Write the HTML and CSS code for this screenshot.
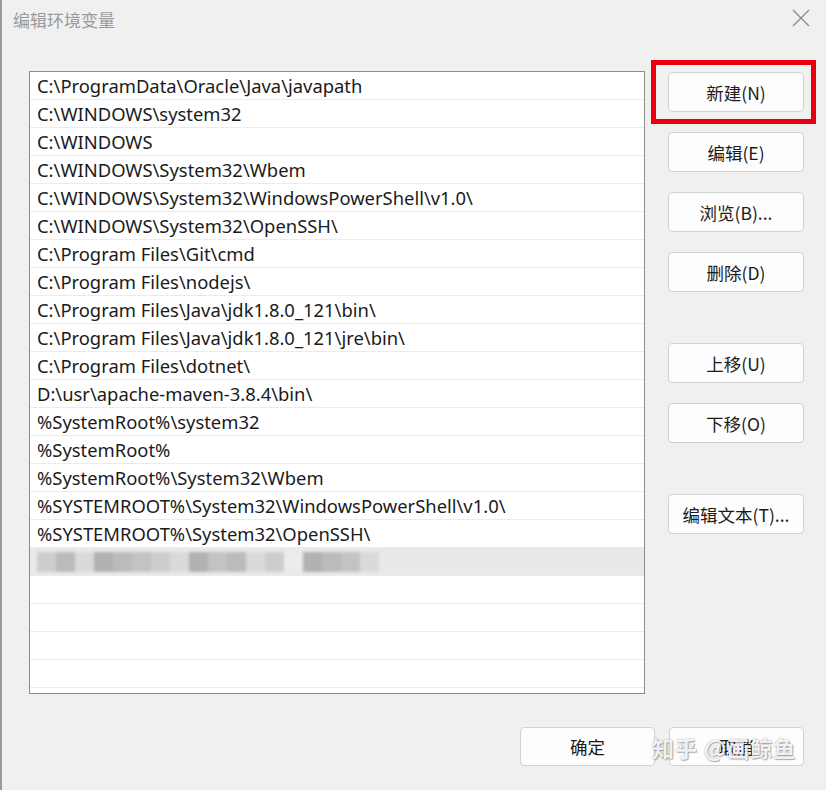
FILE: index.html
```html
<!doctype html>
<html>

<head>
    <meta charset="UTF-8">
    <title>编辑环境变量</title>
    <link rel="stylesheet" href="styles.css">
</head>

<body>
    <div class="dialog">
        <div class="title-bar">
            <span class="title">编辑环境变量</span>
            <span class="close">
                <svg width="18" height="18" viewBox="0 0 18 18">
                    <path d="M1 1 L17 17 M17 1 L1 17" stroke="#8a8a8a" stroke-width="1.3" fill="none" />
                </svg>
            </span>
        </div>

        <div class="main">
            <ul class="path-list">
                <li>C:\ProgramData\Oracle\Java\javapath</li>
                <li>C:\WINDOWS\system32</li>
                <li>C:\WINDOWS</li>
                <li>C:\WINDOWS\System32\Wbem</li>
                <li>C:\WINDOWS\System32\WindowsPowerShell\v1.0\</li>
                <li>C:\WINDOWS\System32\OpenSSH\</li>
                <li>C:\Program Files\Git\cmd</li>
                <li>C:\Program Files\nodejs\</li>
                <li>C:\Program Files\Java\jdk1.8.0_121\bin\</li>
                <li>C:\Program Files\Java\jdk1.8.0_121\jre\bin\</li>
                <li>C:\Program Files\dotnet\</li>
                <li>D:\usr\apache-maven-3.8.4\bin\</li>
                <li>%SystemRoot%\system32</li>
                <li>%SystemRoot%</li>
                <li>%SystemRoot%\System32\Wbem</li>
                <li>%SYSTEMROOT%\System32\WindowsPowerShell\v1.0\</li>
                <li>%SYSTEMROOT%\System32\OpenSSH\</li>
                <li class="selected">
                    <!-- 打码的一行 -->
                    <span class="mosaic">
                        <i class="m1"></i><i class="m2"></i><i class="m3"></i><i class="m4"></i><i class="m2"></i><i class="m5"></i><i class="m1"></i><i class="m3"></i><i class="m4"></i><i class="m5"></i><i class="m2"></i><i class="m3"></i><i class="m1"></i><i class="m6"></i><i class="m4"></i><i class="m2"></i><i class="m5"></i><i class="m3"></i>
                    </span>
                </li>
                <li></li>
                <li></li>
                <li></li>
                <li></li>
            </ul>

            <div class="side-buttons">
                <button class="btn">新建(N)</button>
                <button class="btn">编辑(E)</button>
                <button class="btn">浏览(B)...</button>
                <button class="btn">删除(D)</button>
                <button class="btn group-start">上移(U)</button>
                <button class="btn">下移(O)</button>
                <button class="btn group-start">编辑文本(T)...</button>
            </div>
        </div>

        <div class="footer">
            <button class="btn">确定</button>
            <button class="btn">取消</button>
        </div>

        <div class="highlight"></div>
        <div class="watermark">知乎 @画鲸鱼</div>
    </div>
</body>

</html>
```

FILE: styles.css
```css
* {
    margin: 0;
    padding: 0;
    box-sizing: border-box;
}

html,
body {
    width: 100%;
    height: 100%;
    overflow: hidden;
}

body {
    background-color: #f0f0f0;
    font-family: "Noto Sans", "Noto Sans CJK SC", sans-serif;
    color: #1b1b1b;
}

.dialog {
    position: relative;
    height: 100%;
    border-left: 2px solid #9a9a9a;
}

.title-bar {
    height: 40px;
    display: flex;
    align-items: center;
    justify-content: space-between;
    padding: 0 16px 2px 11px;
}

.title {
    font-size: 17px;
    color: #9a9a9a;
    font-family: "Noto Sans CJK SC", sans-serif;
}

.close {
    display: flex;
    margin-top: -2px;
}

.main {
    display: flex;
    align-items: flex-start;
    padding: 31px 0 0 27px;
}

.path-list {
    list-style: none;
    width: 616px;
    height: 623px;
    overflow: hidden;
    background-color: #fff;
    border: 1px solid #8e8e8e;
}

.path-list li {
    height: 28px;
    border-bottom: 1px solid #ececec;
    padding-left: 7px;
    font-size: 18.4px;
    line-height: 28px;
    white-space: nowrap;
}

.path-list li.selected {
    background-color: #e9e9e9;
    display: flex;
    align-items: center;
}

.mosaic {
    display: flex;
    height: 20px;
    filter: blur(1.5px);
    opacity: 0.85;
}

.mosaic i {
    display: block;
    width: 19px;
    height: 100%;
}

.mosaic .m1 {
    background-color: #c9c9c9;
}

.mosaic .m2 {
    background-color: #b3b3b3;
}

.mosaic .m3 {
    background-color: #d8d8d8;
}

.mosaic .m4 {
    background-color: #a8a8a8;
}

.mosaic .m5 {
    background-color: #bdbdbd;
}

.mosaic .m6 {
    background-color: #ededed;
}

.side-buttons {
    display: flex;
    flex-direction: column;
    gap: 20px;
    margin: 1px 0 0 23px;
}

.btn {
    width: 136px;
    height: 40px;
    background-color: #fdfdfd;
    border: 1px solid #d2d2d2;
    border-radius: 4px;
    font-family: "Noto Sans CJK SC", sans-serif;
    font-size: 17.5px;
    color: #1b1b1b;
}

.side-buttons .group-start {
    margin-top: 31px;
}

.footer {
    display: flex;
    justify-content: flex-end;
    gap: 14px;
    padding: 33px 22px 0 0;
}

.footer .btn {
    width: 135px;
    height: 39px;
}

.highlight {
    position: absolute;
    left: 649px;
    top: 60px;
    width: 165px;
    height: 64px;
    border: 5px solid #e8000e;
}

.watermark {
    position: absolute;
    left: 650px;
    top: 731px;
    font-family: "Noto Sans CJK SC", sans-serif;
    font-size: 22px;
    font-weight: bold;
    color: rgba(255, 255, 255, 0.9);
    text-shadow: 0 0 2px rgba(0, 0, 0, 0.35), 1px 1px 1px rgba(0, 0, 0, 0.25);
    letter-spacing: 1px;
}
```
